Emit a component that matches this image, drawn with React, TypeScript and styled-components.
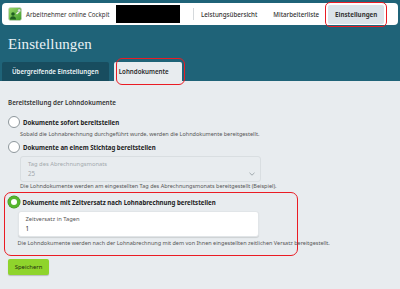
import React from "react";
import styled, { createGlobalStyle } from "styled-components";

const Global = createGlobalStyle`
  html, body { margin: 0; padding: 0; }
  body {
    width: 400px;
    height: 289px;
    overflow: hidden;
    background: #e8ecef;
    font-family: "Noto Sans", "Open Sans", sans-serif;
    color: #2b2b2b;
  }
`;

const Page = styled.div`
  width: 400px;
  height: 289px;
  display: flex;
  flex-direction: column;
  background: #e8ecef;
`;

const Hero = styled.header`
  background: #1f6378;
  display: flex;
  flex-direction: column;
`;

const TopBar = styled.div`
  margin: 3px 2px 0;
  height: 22px;
  background: #ffffff;
  border-radius: 4px;
  display: flex;
  align-items: center;
  padding-left: 6px;
`;

const Brand = styled.span`
  margin-left: 4px;
  width: 86px;
  font-size: 6.2px;
  color: #333;
  white-space: nowrap;
`;

const Redacted = styled.div`
  margin-left: 4px;
  width: 64px;
  height: 18px;
  background: #000;
`;

const Divider = styled.div`
  margin-left: 13px;
  width: 1px;
  height: 12px;
  background: #d5d9dc;
`;

const Nav = styled.nav`
  display: flex;
  align-items: center;
  margin-left: 0;
  height: 100%;
`;

const NavItem = styled.span<{ $active?: boolean }>`
  position: relative;
  display: flex;
  align-items: center;
  height: 19px;
  padding: 0 7px;
  font-size: 6.2px;
  font-weight: ${(p) => (p.$active ? 700 : 500)};
  color: #333;
  white-space: nowrap;
  border-radius: 2px;
  background: ${(p) => (p.$active ? "#dbe3e9" : "transparent")};
  margin-right: ${(p) => (p.$active ? "0" : "2px")};
  ${(p) =>
    p.$active &&
    `
    &::after {
      content: "";
      position: absolute;
      inset: -3px -3px -3px -3px;
      border: 1.5px solid #ea1c24;
      border-radius: 5px;
    }
  `}
`;

const Title = styled.h1`
  margin: 0;
  padding: 11px 8px 0;
  font-family: "Liberation Serif", "DejaVu Serif", serif;
  font-weight: 400;
  font-size: 15px;
  line-height: 16px;
  color: #eaf2f5;
  letter-spacing: 0.1px;
`;

const TabRow = styled.div`
  margin-top: 10px;
  padding-left: 2px;
  display: flex;
  gap: 5px;
  height: 19px;
`;

const Tab = styled.div<{ $active?: boolean }>`
  position: relative;
  display: flex;
  align-items: center;
  padding: ${(p) => (p.$active ? "0 13px 0 5px" : "0 10px")};
  font-size: 6.2px;
  font-weight: 600;
  color: ${(p) => (p.$active ? "#2b2b2b" : "#eef4f6")};
  background: ${(p) => (p.$active ? "#e8ecef" : "#184d5f")};
  border-radius: 2px 2px 0 0;
  white-space: nowrap;
  ${(p) =>
    p.$active &&
    `
    &::after {
      content: "";
      position: absolute;
      left: 2px;
      right: -3px;
      top: -4px;
      bottom: -4px;
      border: 1.5px solid #ea1c24;
      border-radius: 6px;
    }
  `}
`;

const Content = styled.main`
  padding: 17px 8px 0 8px;
  display: flex;
  flex-direction: column;
`;

const SectionTitle = styled.div`
  font-size: 6.3px;
  font-weight: 600;
  line-height: 10px;
  color: #333;
`;

const RadioRow = styled.label<{ $gap?: number }>`
  display: flex;
  align-items: center;
  height: 12px;
  gap: 3px;
  margin-top: ${(p) => p.$gap ?? 0}px;
  font-size: 6.1px;
  font-weight: 700;
  color: #222;
  white-space: nowrap;
`;

const RadioDot = styled.span<{ $checked?: boolean }>`
  box-sizing: border-box;
  width: 12px;
  height: 12px;
  border-radius: 50%;
  flex: none;
  background: #fff;
  border: ${(p) => (p.$checked ? "3px solid #55b52d" : "1px solid #8e979c")};
  box-shadow: ${(p) => (p.$checked ? "0 0 0 0.5px #3f8f1f" : "none")};
`;

const Desc = styled.div<{ $indent?: number; $gap?: number }>`
  margin-left: ${(p) => p.$indent ?? 12}px;
  margin-top: ${(p) => p.$gap ?? 0}px;
  font-size: 5.5px;
  line-height: 9px;
  color: #555;
  white-space: nowrap;
`;

const Field = styled.div<{ $disabled?: boolean; $indent?: number }>`
  position: relative;
  box-sizing: border-box;
  margin-top: 3px;
  margin-left: ${(p) => p.$indent ?? 12}px;
  width: 241px;
  height: 26px;
  border-radius: 3px;
  background: ${(p) => (p.$disabled ? "#e8ecef" : "#ffffff")};
  border: 1px solid ${(p) => (p.$disabled ? "#d9dee1" : "#e1e5e8")};
  box-shadow: ${(p) => (p.$disabled ? "none" : "0 1px 1px rgba(0,0,0,0.12)")};
  padding: 3px 7px 0;
  display: flex;
  flex-direction: column;
`;

const FieldLabel = styled.span<{ $disabled?: boolean }>`
  font-size: 5.8px;
  line-height: 8px;
  color: ${(p) => (p.$disabled ? "#a3a9ad" : "#555")};
`;

const FieldValue = styled.span<{ $disabled?: boolean }>`
  font-size: 6.2px;
  line-height: 11px;
  color: ${(p) => (p.$disabled ? "#a3a9ad" : "#222")};
`;

const Chevron = styled.svg`
  position: absolute;
  right: 5px;
  bottom: 5px;
`;

const Highlight = styled.div`
  margin: 1px 0 0 -4px;
  width: 294px;
  box-sizing: border-box;
  height: 64px;
  border: 1.5px solid #ea1c24;
  border-radius: 7px;
  padding: 3px 0 0 2.5px;
  display: flex;
  flex-direction: column;
`;

const Button = styled.button`
  margin-top: 3px;
  align-self: flex-start;
  width: 41px;
  height: 16px;
  border: none;
  border-radius: 2px;
  background: #8fd42c;
  box-shadow: 0 1px 1px rgba(0,0,0,0.2);
  font-family: "Noto Sans", sans-serif;
  font-size: 5.9px;
  color: #1f2b10;
  padding: 0;
`;

const Logo = () => (
  <svg width="14" height="14" viewBox="0 0 14 14">
    <defs>
      <linearGradient id="lg" x1="0" y1="0" x2="1" y2="1">
        <stop offset="0" stopColor="#9bd86a" />
        <stop offset="1" stopColor="#3f9d2a" />
      </linearGradient>
    </defs>
    <rect x="0.5" y="0.5" width="13" height="13" rx="2" fill="url(#lg)" stroke="#c9d3cc" strokeWidth="0.6" />
    <circle cx="5" cy="7" r="1.8" fill="#1f5e22" />
    <path d="M2 12.5 C2 10 3.3 9.2 5 9.2 C6.7 9.2 8 10 8 12.5 Z" fill="#1f5e22" />
    <path d="M8 6.5 L11.5 3 L12.5 4 L9 7.5 Z" fill="#e9efe9" />
    <circle cx="11.2" cy="3.4" r="1.4" fill="#dfe6e0" stroke="#8a9a8c" strokeWidth="0.4" />
  </svg>
);

export default function App() {
  return (
    <Page>
      <Global />
      <Hero>
        <TopBar>
          <Logo />
          <Brand>Arbeitnehmer online Cockpit</Brand>
          <Redacted />
          <Divider />
          <Nav>
            <NavItem>Leistungsübersicht</NavItem>
            <NavItem>Mitarbeiterliste</NavItem>
            <NavItem $active>Einstellungen</NavItem>
          </Nav>
        </TopBar>
        <Title>Einstellungen</Title>
        <TabRow>
          <Tab>Übergreifende Einstellungen</Tab>
          <Tab $active>Lohndokumente</Tab>
        </TabRow>
      </Hero>
      <Content>
        <SectionTitle>Bereitstellung der Lohndokumente</SectionTitle>
        <RadioRow $gap={8}>
          <RadioDot />
          Dokumente sofort bereitstellen
        </RadioRow>
        <Desc $gap={2}>
          Sobald die Lohnabrechnung durchgeführt wurde, werden die Lohndokumente bereitgestellt.
        </Desc>
        <RadioRow $gap={2}>
          <RadioDot />
          Dokumente an einem Stichtag bereitstellen
        </RadioRow>
        <Field $disabled>
          <FieldLabel $disabled>Tag des Abrechnungsmonats</FieldLabel>
          <FieldValue $disabled>25</FieldValue>
          <Chevron width="6" height="4" viewBox="0 0 6 4">
            <path d="M0.5 0.8 L3 3.2 L5.5 0.8" fill="none" stroke="#8e979c" strokeWidth="0.8" />
          </Chevron>
        </Field>
        <Desc>
          Die Lohndokumente werden am eingestellten Tag des Abrechnungsmonats bereitgestellt (Beispiel).
        </Desc>
        <Highlight>
          <RadioRow>
            <RadioDot $checked />
            Dokumente mit Zeitversatz nach Lohnabrechnung bereitstellen
          </RadioRow>
          <Field $indent={10}>
            <FieldLabel>Zeitversatz in Tagen</FieldLabel>
            <FieldValue>1</FieldValue>
          </Field>
          <Desc $indent={10} $gap={2}>
            Die Lohndokumente werden nach der Lohnabrechnung mit dem von Ihnen eingestellten zeitlichen Versatz bereitgestellt.
          </Desc>
        </Highlight>
        <Button>Speichern</Button>
      </Content>
    </Page>
  );
}
